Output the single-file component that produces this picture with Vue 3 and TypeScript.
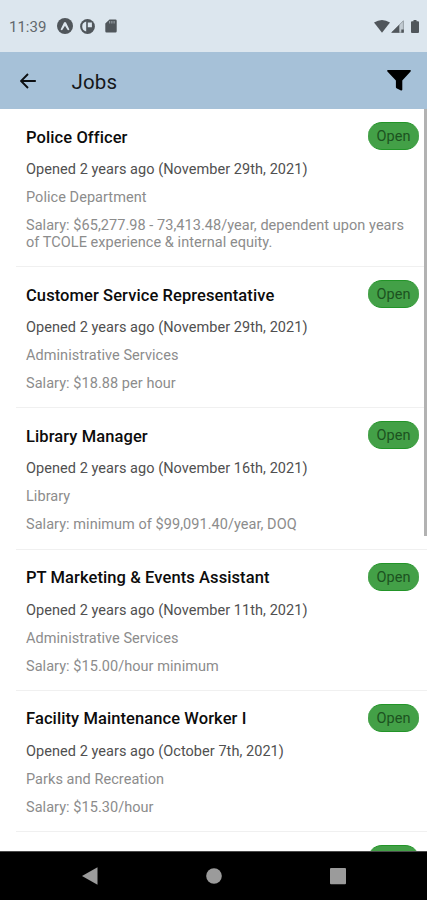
<script setup lang="ts">
interface Job {
  title: string
  opened: string
  department: string
  salary: string
}

const jobs: Job[] = [
  {
    title: 'Police Officer',
    opened: 'Opened 2 years ago (November 29th, 2021)',
    department: 'Police Department',
    salary: 'Salary: $65,277.98 - 73,413.48/year, dependent upon years of TCOLE experience & internal equity.',
  },
  {
    title: 'Customer Service Representative',
    opened: 'Opened 2 years ago (November 29th, 2021)',
    department: 'Administrative Services',
    salary: 'Salary: $18.88 per hour',
  },
  {
    title: 'Library Manager',
    opened: 'Opened 2 years ago (November 16th, 2021)',
    department: 'Library',
    salary: 'Salary: minimum of $99,091.40/year, DOQ',
  },
  {
    title: 'PT Marketing & Events Assistant',
    opened: 'Opened 2 years ago (November 11th, 2021)',
    department: 'Administrative Services',
    salary: 'Salary: $15.00/hour minimum',
  },
  {
    title: 'Facility Maintenance Worker I',
    opened: 'Opened 2 years ago (October 7th, 2021)',
    department: 'Parks and Recreation',
    salary: 'Salary: $15.30/hour',
  },
]
</script>

<template>
  <div class="screen">
    <div class="status">
      <span class="clock">11:39</span>
      <svg class="st-expo" viewBox="0 0 16 16">
        <circle cx="8" cy="8" r="8" fill="#50565b" />
        <path d="M3.600 11.600 7 4.600q1-1.400 2 0l3.400 7q-1.300 1.300-2.200-.3L8 7.700l-2.200 3.600q-.9 1.600-2.200.3z" fill="#dce6ee" />
      </svg>
      <svg class="st-p" viewBox="0 0 15 15">
        <circle cx="7.500" cy="7.500" r="7.400" fill="#50565b" />
        <path d="M6.200 2.600v9.900Q2.200 11.500 2.200 7.500t4-4.900zM7.800 3.400h4.100v4.800H7.800z" fill="#dce6ee" />
      </svg>
      <svg class="st-sd" viewBox="0 0 12 14">
        <path d="M4.500.6h6a1.200 1.200 0 0 1 1.200 1.200v10.400a1.200 1.200 0 0 1-1.200 1.200h-9A1.200 1.200 0 0 1 .3 12.200V4.600z" fill="#50565b" />
        <path d="M4.700 2v2.500M6.900 2v2.500M9.100 2v2.500" stroke="#aab3ba" stroke-width=".9" />
      </svg>
      <span class="fill"></span>
      <svg class="st-wifi" viewBox="0 0 16 13">
        <path d="M0 2.600Q8-2.600 16 2.600L8 12.800z" fill="#50565b" />
      </svg>
      <svg class="st-cell" viewBox="0 0 13 13">
        <path d="M.8 12.300 12.400.8v11.500z" fill="#c3ccd3" stroke="#7f878d" stroke-width=".7" />
        <path d="M.2 12.700 8.300 4.700v8z" fill="#50565b" />
        <path d="M10.300 9.500h2.500v3.200h-2.500z" fill="#50565b" />
      </svg>
      <svg class="st-bat" viewBox="0 0 8 13">
        <path d="M2.500 0h3v1.300H7q1 0 1 1V12q0 1-1 1H1q-1 0-1-1V2.300q0-1 1-1h1.500z" fill="#50565b" />
      </svg>
    </div>

    <header class="bar">
      <svg class="back" viewBox="0 0 16 16">
        <path d="M15.800 8H1.200M8 1 1 8l7 7" fill="none" stroke="#0c0f12" stroke-width="1.900" />
      </svg>
      <h1>Jobs</h1>
      <span class="fill"></span>
      <svg class="filter" viewBox="0 0 24 21">
        <path d="M.9 0h22.200q1.200.4.500 1.500L15.300 10.500v9.300q-.3 1-1.300.6L9.500 18.300q-.6-.4-.6-1v-6.800L.4 1.500Q-.3.4.9 0z" fill="#000" />
      </svg>
    </header>

    <main class="list">
      <article v-for="(job, i) in jobs" :key="i" class="job">
        <div class="head">
          <h2>{{ job.title }}</h2>
          <span class="badge">Open</span>
        </div>
        <p class="opened">{{ job.opened }}</p>
        <p>{{ job.department }}</p>
        <p>{{ job.salary }}</p>
      </article>
      <!-- top edge of the next row, mostly below the fold -->
      <div class="job peek">
        <span class="badge"></span>
      </div>
      <div class="thumb"></div>
    </main>

    <nav class="nav">
      <svg viewBox="0 0 16 18"><path d="M0 9 15.500.3v17.400z" fill="#9b9b9b" /></svg>
      <svg viewBox="0 0 16 18"><circle cx="8" cy="9" r="7.800" fill="#9b9b9b" /></svg>
      <svg viewBox="0 0 16 18"><rect y="1" width="16" height="16.300" rx="1" fill="#9b9b9b" /></svg>
    </nav>
  </div>
</template>

<style>
body {
  background: #fff;
}
</style>

<style scoped>
.screen {
  display: flex;
  flex-direction: column;
  width: 427px;
  height: 900px;
  overflow: hidden;
  background: #fff;
  font-family: Roboto, sans-serif;
}
svg {
  display: block;
  flex: none;
}
.fill {
  flex: 1;
}
.status {
  display: flex;
  align-items: center;
  flex: none;
  box-sizing: border-box;
  height: 51.500px;
  padding: 1px 8px 0 9px;
  background: #dce6ee;
}
.clock {
  width: 48px;
  padding-top: 1px;
  font-size: 15px;
  color: #62686d;
}
.st-expo {
  width: 16px;
  height: 16px;
}
.st-p {
  width: 15px;
  height: 15px;
  margin-left: 7px;
}
.st-sd {
  width: 12px;
  height: 14px;
  margin-left: 10px;
}
.st-wifi {
  width: 16px;
  height: 13px;
}
.st-cell {
  width: 13px;
  height: 13px;
  margin: 0 7px 0 1px;
}
.st-bat {
  width: 8px;
  height: 13px;
}
.bar {
  display: flex;
  align-items: center;
  flex: none;
  box-sizing: border-box;
  height: 57.500px;
  padding: 1px 16px 0 20px;
  background: #a6c1d8;
}
.back {
  width: 16px;
  height: 16px;
}
h1 {
  margin: 2px 0 0 35.500px;
  font-size: 20.500px;
  font-weight: 400;
  letter-spacing: 0.150px;
  color: #15181b;
}
.filter {
  width: 24px;
  height: 21px;
}
.list {
  position: relative;
  flex: 1;
  min-height: 0;
  overflow: hidden;
}
.job {
  margin-left: 16px;
  padding: 13px 8px 15.200px 10px;
  border-bottom: 1px solid #f0f0f0;
}
.peek {
  display: flex;
  justify-content: flex-end;
}
.head {
  display: flex;
  align-items: center;
  justify-content: space-between;
  height: 28px;
}
h2 {
  margin: 2px 0 0;
  font-size: 16.500px;
  font-weight: 500;
  letter-spacing: 0.090px;
  color: #0c0c0c;
}
.badge {
  display: flex;
  align-items: center;
  justify-content: center;
  box-sizing: border-box;
  width: 51px;
  height: 28px;
  padding-top: 1px;
  border-radius: 14px;
  border: solid #229428;
  border-width: 1px 0;
  background: #43a047;
  color: #1c5220;
  font-size: 14.500px;
  letter-spacing: 0.100px;
}
p {
  min-height: 17px;
  margin: 11px 0 0;
  font-size: 14.500px;
  line-height: 17px;
  letter-spacing: 0.050px;
  color: #8c8c8c;
}
.opened {
  color: #505050;
}
.thumb {
  position: absolute;
  top: 0;
  right: 0;
  width: 3.500px;
  height: 427px;
  background: #b2b2b2;
}
.nav {
  display: flex;
  align-items: center;
  flex: none;
  gap: 108px;
  box-sizing: border-box;
  height: 49px;
  padding-left: 81.500px;
  border-top: 1px solid #4a4a4a;
  background: #000;
}
.nav svg {
  width: 16px;
  height: 18px;
}
</style>
